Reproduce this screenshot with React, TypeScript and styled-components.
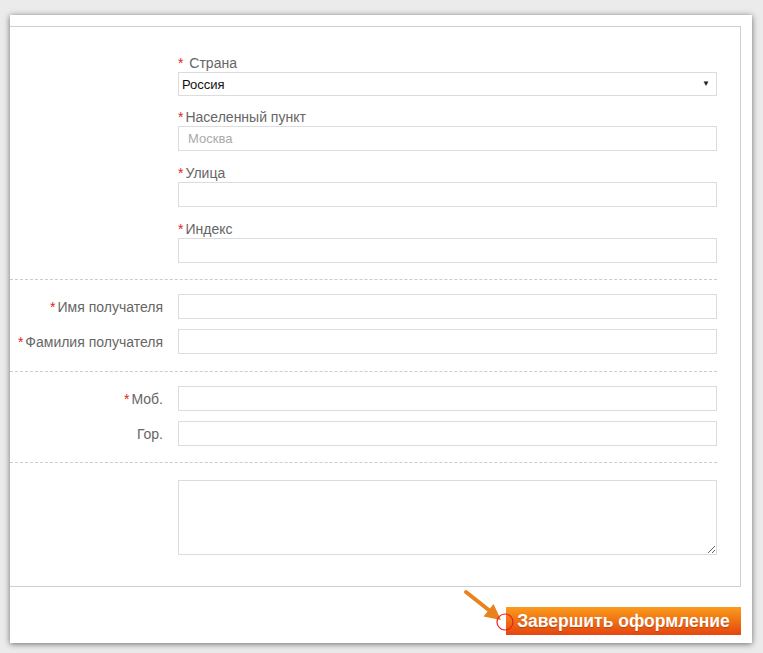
import styled, { createGlobalStyle } from "styled-components";

const GlobalStyle = createGlobalStyle`
  body {
    margin: 0;
    background-color: #ebebeb;
    font-family: "Liberation Sans", Arial, sans-serif;
  }
`;

const Page = styled.div`
  padding: 15px 0 0 10px;
  width: 763px;
  height: 653px;
  box-sizing: border-box;
`;

const Card = styled.div`
  position: relative;
  width: 742px;
  height: 628px;
  box-sizing: border-box;
  padding: 11px 11px 0 0;
  background-color: white;
  box-shadow: 0 1px 6px rgba(0, 0, 0, 0.55);
`;

const FormBox = styled.div`
  height: 561px;
  box-sizing: border-box;
  border: 1px solid #cfcfcf;
  border-left: none;
  padding-top: 27px;
`;

const Group = styled.div<{ $gap?: number }>`
  margin-left: 168px;
  margin-bottom: ${(p) => p.$gap ?? 13}px;
  width: 539px;
`;

const TopLabel = styled.div`
  font-size: 14px;
  line-height: 18px;
  color: #666;
`;

const Star = styled.span`
  color: #e41b1b;
  margin-right: 2px;
`;

const Input = styled.input`
  display: block;
  width: 100%;
  height: 25px;
  box-sizing: border-box;
  border: 1px solid #dcdcdc;
  padding: 0 9px;
  font-family: inherit;
  font-size: 13px;
  color: #333;
  outline: none;

  &::placeholder {
    color: #aaa;
  }
`;

const SelectWrap = styled.div`
  position: relative;
`;

const Select = styled.select`
  display: block;
  width: 100%;
  height: 24px;
  box-sizing: border-box;
  border: 1px solid #dcdcdc;
  padding: 0 3px;
  background: white;
  appearance: none;
  font-family: inherit;
  font-size: 13px;
  color: #111;
  border-radius: 0;
  outline: none;
`;

const Caret = styled.span`
  position: absolute;
  right: 7px;
  top: 7px;
  font-size: 8px;
  color: #222;
  pointer-events: none;
`;

const Divider = styled.div<{ $before: number; $after: number }>`
  margin: ${(p) => `${p.$before}px 23px ${p.$after}px 0`};
  border-top: 1px dashed #cccccc;
`;

const Row = styled.div`
  display: grid;
  grid-template-columns: 153px 539px;
  column-gap: 15px;
  align-items: center;
  margin-bottom: 10px;

  &:last-of-type {
    margin-bottom: 0;
  }
`;

const SideLabel = styled.div`
  text-align: right;
  font-size: 14px;
  color: #666;
  white-space: nowrap;
`;

const TextArea = styled.textarea`
  display: block;
  width: 100%;
  height: 75px;
  box-sizing: border-box;
  border: 1px solid #dcdcdc;
  resize: vertical;
  outline: none;
`;

const Footer = styled.div`
  display: flex;
  justify-content: flex-end;
  padding-top: 20px;
`;

const SubmitButton = styled.button`
  width: 235px;
  height: 28px;
  border: none;
  padding: 0;
  background: linear-gradient(#fb9c1b, #e4450f);
  color: white;
  font-family: inherit;
  font-size: 17.5px;
  font-weight: bold;
  text-shadow: 0 1px 1px rgba(120, 30, 0, 0.4);
  cursor: pointer;
`;

const Pointer = styled.svg`
  position: absolute;
  left: 442px;
  top: 558px;
  pointer-events: none;
`;

const Section = ({ children }: { children: React.ReactNode }) => <>{children}</>;

const App = () => {
  return (
    <Page>
      <GlobalStyle />
      <Card>
        <FormBox>
          <Group $gap={12}>
            <TopLabel>
              <Star>*</Star> Страна
            </TopLabel>
            <SelectWrap>
              <Select defaultValue="ru">
                <option value="ru">Россия</option>
              </Select>
              <Caret>▼</Caret>
            </SelectWrap>
          </Group>
          <Group>
            <TopLabel>
              <Star>*</Star>Населенный пункт
            </TopLabel>
            <Input placeholder="Москва" />
          </Group>
          <Group>
            <TopLabel>
              <Star>*</Star>Улица
            </TopLabel>
            <Input />
          </Group>
          <Group $gap={0}>
            <TopLabel>
              <Star>*</Star>Индекс
            </TopLabel>
            <Input />
          </Group>

          <Divider $before={16} $after={14} />
          <Section>
            <Row>
              <SideLabel>
                <Star>*</Star>Имя получателя
              </SideLabel>
              <Input />
            </Row>
            <Row>
              <SideLabel>
                <Star>*</Star>Фамилия получателя
              </SideLabel>
              <Input />
            </Row>
          </Section>

          <Divider $before={17} $after={14} />
          <Section>
            <Row>
              <SideLabel>
                <Star>*</Star>Моб.
              </SideLabel>
              <Input />
            </Row>
            <Row>
              <SideLabel>Гор.</SideLabel>
              <Input />
            </Row>
          </Section>

          <Divider $before={16} $after={17} />
          <Group $gap={0}>
            <TextArea />
          </Group>
        </FormBox>
        <Footer>
          <SubmitButton>Завершить оформление</SubmitButton>
        </Footer>

        <Pointer width="70" height="70" viewBox="0 0 70 70">
          <line x1="14" y1="19" x2="38" y2="38" stroke="#e8821f" strokeWidth="4" strokeLinecap="round" />
          <polygon points="49,47 31.5,43.5 41.5,31" fill="#e8821f" />
          <circle cx="53" cy="49" r="8" fill="none" stroke="#e8211f" strokeWidth="1.2" />
        </Pointer>
      </Card>
    </Page>
  );
};

export default App;
